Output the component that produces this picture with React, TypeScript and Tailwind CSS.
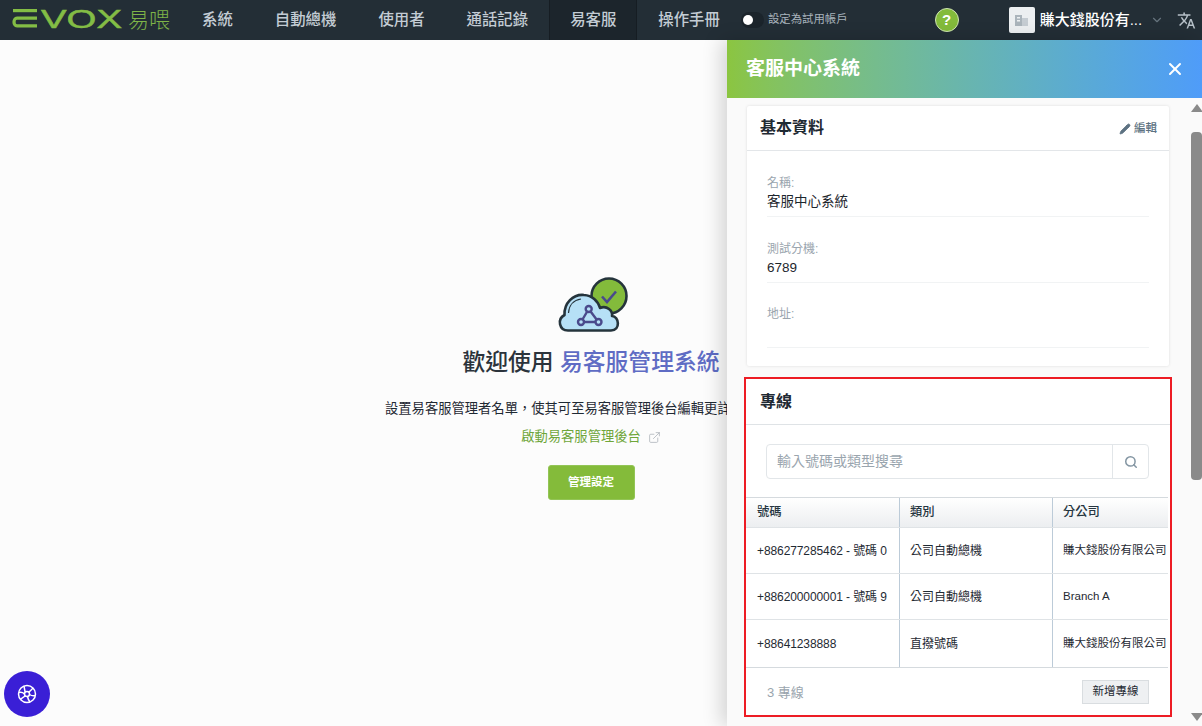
import { ChevronDown, ExternalLink, Pencil, Search, X } from 'lucide-react';
import { MdTranslate } from 'react-icons/md';

const NAV_ITEMS = [
  { label: '系統', active: false },
  { label: '自動總機', active: false },
  { label: '使用者', active: false },
  { label: '通話記錄', active: false },
  { label: '易客服', active: true },
  { label: '操作手冊', active: false },
];

const FIELDS = [
  { label: '名稱:', value: '客服中心系統' },
  { label: '測試分機:', value: '6789' },
  { label: '地址:', value: '' },
];

const LINES = [
  { number: '+886277285462 - 號碼 0', type: '公司自動總機', branch: '賺大錢股份有限公司' },
  { number: '+886200000001 - 號碼 9', type: '公司自動總機', branch: 'Branch A' },
  { number: '+88641238888', type: '直撥號碼', branch: '賺大錢股份有限公司' },
];

function Logo() {
  return (
    <svg width="181" height="40" viewBox="0 0 181 40" className="shrink-0">
      <g fill="none" stroke="#83bd45" strokeWidth="3.2">
        <path d="M37 10.6H13" />
        <path d="M37 25.8H17C13 25.8 13 18.2 17 18.2H37" />
      </g>
      <text
        x="41"
        y="27.5"
        textLength="81"
        lengthAdjust="spacingAndGlyphs"
        fontSize="25"
        fontFamily="Liberation Sans, sans-serif"
        fill="#83bd45"
        stroke="#83bd45"
        strokeWidth="0.5"
      >
        VOX
      </text>
      <text
        x="128"
        y="27"
        fontSize="21"
        fontFamily="Noto Sans CJK TC, sans-serif"
        fontWeight="300"
        fill="#7fb548"
      >
        易喂
      </text>
    </svg>
  );
}

function TopBar() {
  return (
    <header className="flex h-10 items-stretch bg-[#232e36]">
      <Logo />
      <nav className="flex items-stretch">
        {NAV_ITEMS.map((item) => (
          <div
            key={item.label}
            className={`flex items-center text-[15.4px] font-medium text-[#c3ccd4] ${
              item.active ? 'border-x border-x-[#161d23] bg-[#1c252c] px-[20px]' : 'px-[21px]'
            }`}
          >
            {item.label}
          </div>
        ))}
      </nav>
      <div className="flex items-center">
        <div className="flex h-4 w-[23px] items-center rounded-full bg-[#1b242b] pl-[2px]">
          <span className="size-[10px] rounded-full bg-white" />
        </div>
        <span className="ml-1 text-[11.4px] text-[#a9b4bd]">設定為試用帳戶</span>
      </div>
      <div className="ml-[87px] flex items-center">
        <span className="flex size-[24px] items-center justify-center rounded-full border border-[#cfe3b4] bg-[#83bb3b] text-[15px] font-bold text-white">
          ?
        </span>
      </div>
      <div className="ml-[50px] flex items-center">
        <div className="flex h-[26px] w-[26px] items-center justify-center rounded-[2px] bg-[#eceff1]">
          <svg width="13" height="12" viewBox="0 0 13 12" fill="#aab4bb">
            <rect x="0" y="1" width="7" height="11" />
            <rect x="7" y="4" width="6" height="8" fill="#c5ccd2" />
            <rect x="2" y="3" width="3" height="1.5" fill="#eceff1" />
            <rect x="2" y="6" width="3" height="1.5" fill="#eceff1" />
          </svg>
        </div>
        <span className="ml-[5px] w-[103px] text-[15px] font-medium whitespace-nowrap text-white">賺大錢股份有...</span>
        <ChevronDown className="ml-[7px] size-[14px] text-[#66737d]" />
      </div>
      <div className="ml-[13px] flex items-center">
        <MdTranslate className="size-[19px] text-[#b6c0c8]" />
      </div>
    </header>
  );
}

function CloudIcon() {
  return (
    <svg width="90" height="70" viewBox="545 270 90 70" className="mb-[5px]">
      <circle cx="608" cy="296" r="17.5" fill="#83bb3b" stroke="#25343c" strokeWidth="2.6" />
      <path d="M601 296.5l5 5.5 9-10.5" fill="none" stroke="#4a4a8c" strokeWidth="2.6" />
      <path
        d="M567 330.5C558 330.5 556 319 563.5 315C563 303 572 294 583 295C591 295.500 597 301 599 308C606 305 612 311 611 316C618 316 620 330.500 610 330.500Z"
        fill="#b6e0f6"
        stroke="#25343c"
        strokeWidth="2.6"
        strokeLinejoin="round"
      />
      <path d="M567.500 313C568 305 573 300 580 299" fill="none" stroke="#25343c" strokeWidth="1.2" />
      <path d="M587.700 309L580 322H597.500Z" fill="none" stroke="#4a4a8c" strokeWidth="2.400" />
      <circle cx="587.700" cy="309" r="3" fill="#b6e0f6" stroke="#4a4a8c" strokeWidth="2.400" />
      <circle cx="580" cy="322" r="3" fill="#b6e0f6" stroke="#4a4a8c" strokeWidth="2.400" />
      <circle cx="597.500" cy="322" r="3" fill="#b6e0f6" stroke="#4a4a8c" strokeWidth="2.400" />
    </svg>
  );
}

function Welcome() {
  return (
    <main className="flex flex-1 flex-col items-center pt-[230px] pr-5">
      <CloudIcon />
      <h1 className="text-[22.800px] leading-[34px] font-medium whitespace-nowrap text-[#2b333b]">
        歡迎使用 <span className="text-[#5f6cc4]">易客服管理系統</span>
      </h1>
      {/* rest of this sentence is hidden behind the drawer */}
      <p className="mt-5 w-[412px] text-[13.300px] leading-5 whitespace-nowrap text-[#1f2933]">
        設置易客服管理者名單，使其可至易客服管理後台編輯更詳
      </p>
      <div className="mt-2 flex items-center gap-[7px] text-[13.300px] leading-5 text-[#6fa63a]">
        啟動易客服管理後台
        <ExternalLink className="size-[13px] text-[#a9b0b6]" strokeWidth={1.4} />
      </div>
      <button className="mt-[18px] h-[35px] w-[87px] rounded-[3px] border border-[#93c556] bg-[#84bb3a] text-[11.500px] font-bold text-white">
        管理設定
      </button>
    </main>
  );
}

function InfoCard() {
  return (
    <section className="ml-5 w-[422px] rounded-[2px] bg-white shadow-[0_0_3px_rgba(0,0,0,0.12)]">
      <div className="flex h-[45px] items-center justify-between border-b border-[#e3e6e9] pr-3 pl-[13px]">
        <h2 className="text-[16px] font-bold text-[#1f2a33]">基本資料</h2>
        <span className="flex items-center gap-[3px] pt-px text-[11.500px] font-medium text-[#5d7282]">
          <Pencil className="size-3 fill-[#5d7282]" strokeWidth={1.500} />
          編輯
        </span>
      </div>
      <div className="px-5 pt-6 pb-[18px]">
        {FIELDS.map((field) => (
          <div key={field.label} className="mb-[23.500px] h-[42px] border-b border-[#f1f3f4] last:mb-0">
            <p className="text-[12px] leading-[17px] text-[#9aa5ae]">{field.label}</p>
            <p className="text-[13.500px] leading-[20px] text-[#1d262d]">{field.value}</p>
          </div>
        ))}
      </div>
    </section>
  );
}

function LinesCard() {
  return (
    <section className="mt-[11px] ml-[17px] h-[340px] w-[428px] border-2 border-[#ed1c24] bg-white">
      <h2 className="flex h-[46px] items-center border-b border-[#dfe3e6] pl-[14px] text-[16px] font-bold text-[#1f2a33]">
        專線
      </h2>
      <div className="mx-5 mt-[19px] flex h-[35px] w-[383px] rounded-[4px] border border-[#e2e6e9]">
        <span className="flex flex-1 items-center pl-[10px] text-[14px] text-[#9aa5ae]">輸入號碼或類型搜尋</span>
        <span className="flex w-[36px] items-center justify-center border-l border-[#e2e6e9]">
          <Search className="size-[14px] text-[#8496a3]" strokeWidth={2.600} />
        </span>
      </div>
      <div className="mt-[18px] mr-[2px] overflow-hidden border-y border-[#d5dade]">
        <div className="flex h-[30px] w-[460px] border-b border-[#dfe3e6] bg-gradient-to-b from-white to-[#eceef0] text-[12.300px] font-medium text-[#253540]">
          <div className="flex w-[154px] items-center border-r border-[#bccbd8] pl-[11px]">號碼</div>
          <div className="flex w-[153px] items-center border-r border-[#bccbd8] pl-[10px]">類別</div>
          <div className="flex items-center pl-[10px]">分公司</div>
        </div>
        {LINES.map((line) => (
          <div
            key={line.number}
            className="flex h-[46px] w-[460px] border-b border-[#dfe3e6] text-[12px] text-[#1f2a33] last:h-[47px] last:border-b-0"
          >
            <div className="flex w-[154px] items-center border-r border-[#bccbd8] pl-[11px] tracking-[-0.1px]">{line.number}</div>
            <div className="flex w-[153px] items-center border-r border-[#bccbd8] pl-[10px]">{line.type}</div>
            <div className="flex items-center pl-[10px] text-[11.500px]">{line.branch}</div>
          </div>
        ))}
      </div>
      <div className="flex items-center justify-between pt-3 pr-[21px] pl-[21px]">
        <span className="pt-[2px] text-[13px] text-[#9aa5ae]">3 專線</span>
        <button className="h-[24px] w-[67px] border border-[#d9dde0] bg-[#eef0f2] text-[11.500px] text-[#1f2a33]">
          新增專線
        </button>
      </div>
    </section>
  );
}

function ScrollRail() {
  return (
    <div className="flex w-[11px] shrink-0 flex-col items-center bg-[#fafafa]">
      <span className="mt-[6px] size-0 border-x-[6px] border-b-[8px] border-x-transparent border-b-[#8a8a8a]" />
      <span className="mt-5 h-[348px] w-full rounded-t-[4px] rounded-b-[4px] bg-[#8a8a8a]" />
      <span className="mt-auto mb-[5px] size-0 border-x-[6px] border-t-[8px] border-x-transparent border-t-[#8a8a8a]" />
    </div>
  );
}

function Drawer() {
  return (
    <aside className="absolute top-10 right-0 bottom-0 flex w-[475px] flex-col bg-[#fafafa] shadow-[-6px_0_18px_rgba(0,0,0,0.16)]">
      <div className="flex h-[58px] items-center justify-between bg-gradient-to-r from-[#8bc540] to-[#4f9cf9] pr-[17px] pl-[19px]">
        <h1 className="text-[19px] font-bold text-white">客服中心系統</h1>
        <X className="size-[20px] text-white" strokeWidth={2.400} />
      </div>
      <div className="flex flex-1 overflow-hidden">
        <div className="flex-1 pt-2">
          <InfoCard />
          <LinesCard />
        </div>
        <ScrollRail />
      </div>
    </aside>
  );
}

function SupportButton() {
  return (
    <div className="absolute bottom-[9px] left-1 flex size-[46px] items-center justify-center rounded-full bg-[#3a1fd6]">
      <svg width="20" height="20" viewBox="0 0 20 20" fill="none" stroke="white" strokeWidth="1.500">
        <circle cx="10" cy="10" r="8.500" />
        <circle cx="10" cy="10" r="2.500" />
        <path d="M7 2C7.500 5 7.800 7 8.300 8.200M1.800 8.500C4 8 6.500 9 7.500 10M11.800 8.200C13.500 6.500 15.500 5 16 4M12.500 10.500C14 11.500 17 12 18.300 11.500M10.500 12.500C11 15 12 17 13 18M3.500 15.500C5 14 7 13 8.200 11.800" />
      </svg>
    </div>
  );
}

export default function App() {
  return (
    <div className="relative flex h-[726px] flex-col overflow-hidden bg-[#fcfcfc] font-['Liberation_Sans','Noto_Sans_CJK_TC',sans-serif]">
      <TopBar />
      <Welcome />
      <Drawer />
      <SupportButton />
    </div>
  );
}
